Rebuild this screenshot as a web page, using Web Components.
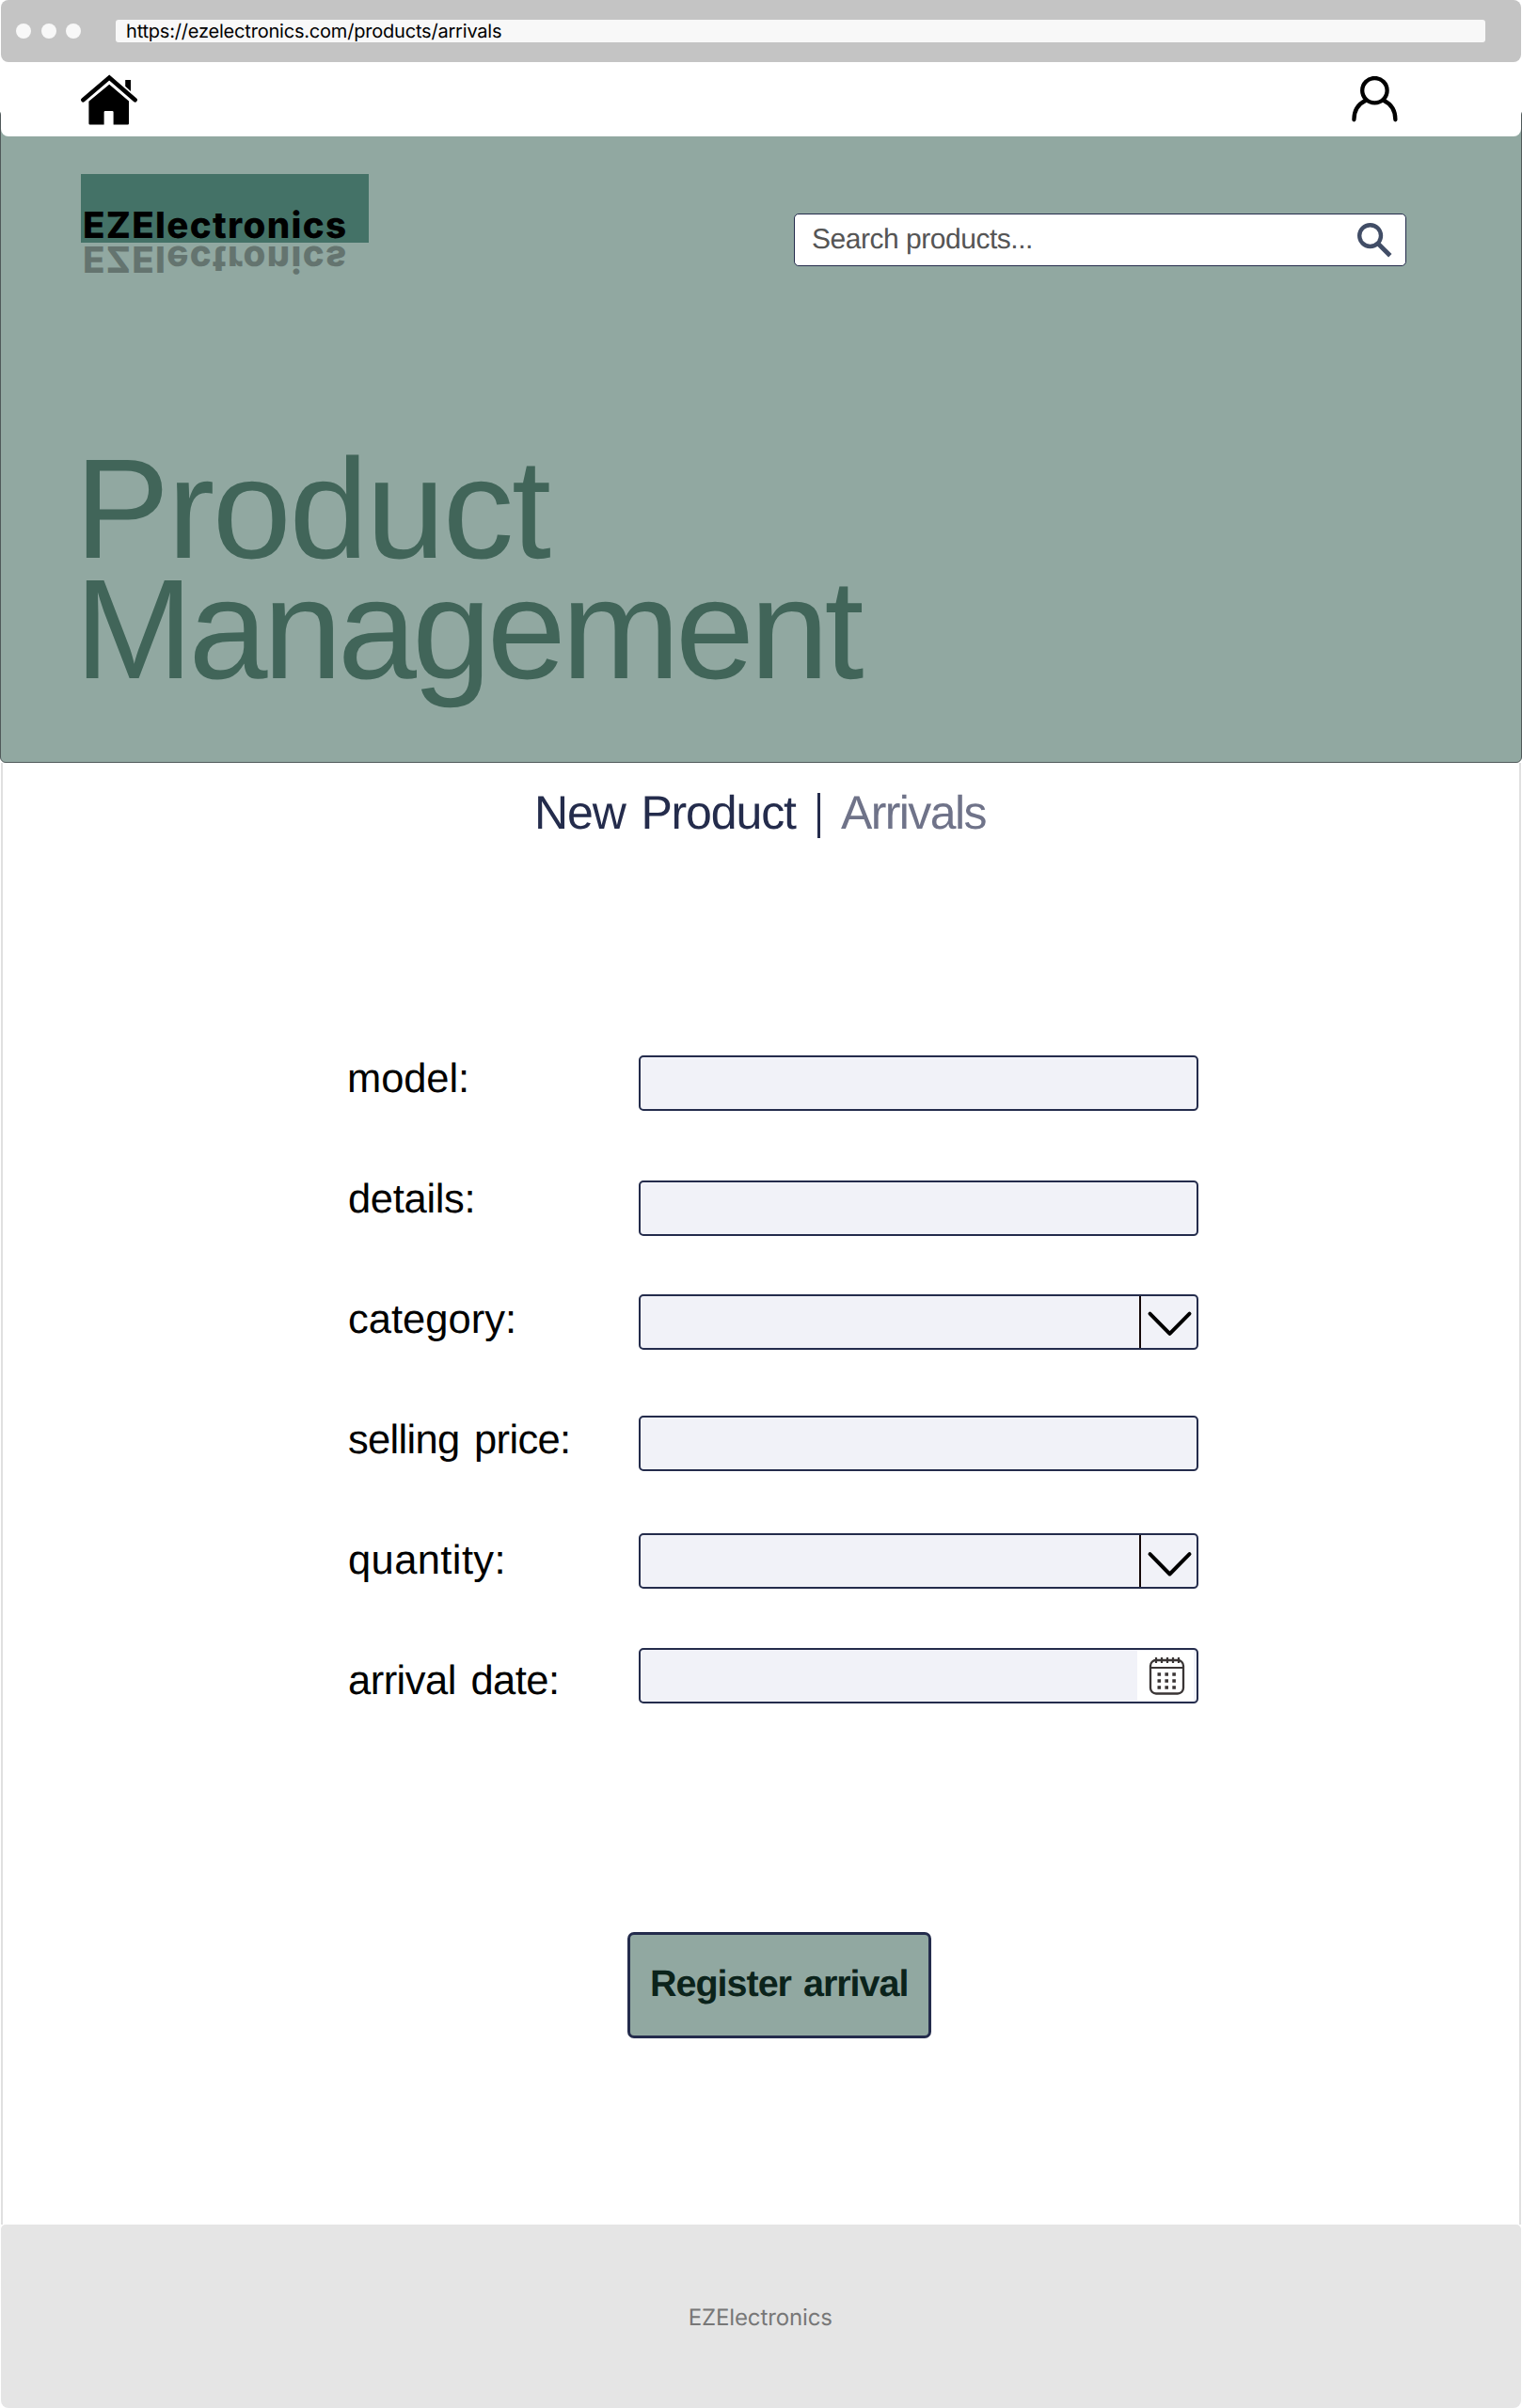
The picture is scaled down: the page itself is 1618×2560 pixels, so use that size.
<!DOCTYPE html>
<html lang="en">
<head>
<meta charset="utf-8">
<title>EZElectronics</title>
<style>
html,body{margin:0;background:#fff}
body{width:1618px;height:2560px;overflow:hidden}
</style>
</head>
<body>
<ez-page></ez-page>
<script>
const define = (name, html, after) => customElements.define(name, class extends HTMLElement {
  connectedCallback() {
    if (this.shadowRoot) return;
    this.attachShadow({mode: 'open'}).innerHTML = html;
    if (after) after.call(this, this.shadowRoot);
  }
});

/* Text whose drawn width is set by the "w" attribute through letter spacing;
   "gap" widens the spaces between words. */
const pen = document.createElement('canvas').getContext('2d');
define('ez-text', `<style>:host{display:block;white-space:nowrap;text-rendering:geometricPrecision}span{display:block}</style><span><slot></slot></span>`, function () {
  const cs = getComputedStyle(this), w = +this.getAttribute('w'), gap = +(this.getAttribute('gap') || 0), t = this.textContent;
  pen.font = `${cs.fontWeight} ${cs.fontSize} ${cs.fontFamily}`;
  const m = pen.measureText(t), ink = m.actualBoundingBoxLeft + m.actualBoundingBoxRight;
  this.style.width = w + 'px';
  const s = this.shadowRoot.querySelector('span');
  s.style.wordSpacing = gap + 'px';
  s.style.letterSpacing = (w - ink - gap * (t.split(' ').length - 1)) / (t.length - 1) + 'px';
  s.style.marginLeft = m.actualBoundingBoxLeft + 'px';
});

define('ez-chrome', `<style>
:host{display:flex;box-sizing:border-box;height:66px;margin:0 1px;padding:0 38px 0 16px;background:#c4c4c4;border-radius:8px;align-items:center;font-family:Inter,sans-serif}
.dots{display:flex;gap:10.5px;width:106px}
i{width:16px;height:16px;border-radius:50%;background:#f8f8f8}
.url{flex:1;height:24px;box-sizing:border-box;background:#f8f8f8;border-radius:3px;padding-left:12px}
ez-text{font-size:20px;line-height:24px;color:#000}
</style><div class="dots"><i></i><i></i><i></i></div><div class="url"><ez-text w="398">https://ezelectronics.com/products/arrivals</ez-text></div>`);

define('ez-topbar', `<style>
:host{display:flex;box-sizing:border-box;height:79px;margin:0 1px;padding:13px 131px 0 85px;background:#fff;border-radius:0 0 8px 8px;justify-content:space-between;position:relative;z-index:1}
svg{display:block}
.user{margin-top:2px}
</style>
<svg width="60" height="55" viewBox="0 0 60 55"><path d="M53 6V18L47.2 12.8V6Z"/><path d="M2.4 27.2 30.2 3.6 57.6 27.2" fill="none" stroke="#000" stroke-width="4.6" stroke-linecap="round"/><path d="M30.2 10.8 51 28.6V52.3Q51 53.6 49.8 53.6H34.6V40.3Q34.6 39 33.4 39H25.8Q24.6 39 24.6 40.3V53.6H9.6Q8.4 53.6 8.4 52.3V28.8Z"/></svg>
<svg class="user" width="49" height="49" viewBox="0 0 49 49" fill="none" stroke="#000" stroke-width="4.3" stroke-linecap="round"><circle cx="24.4" cy="15.2" r="13.2"/><path d="M2.4 46.3C2.4 37 7 29.5 15 25.8M46.4 46.3C46.4 37 41.8 29.5 33.8 25.8"/></svg>`);

define('ez-logo', `<style>
:host{display:block;width:306px;font:800 38.5px Inter,sans-serif;color:#000}
.box{height:73px;box-sizing:border-box;background:#447267;padding:36px 0 0 4px}
ez-text{line-height:38px}
.mirror{margin-top:-2px;padding-left:4px;transform:scaleY(-1);opacity:.3;height:38px}
</style><div class="box"><ez-text w="277">EZElectronics</ez-text></div><div class="mirror" aria-hidden="true"><ez-text w="277">EZElectronics</ez-text></div>`);

define('ez-search', `<style>
:host{display:flex;box-sizing:border-box;width:651px;height:56px;border:1.5px solid #242c4c;border-radius:5px;background:#fff;padding:0 14px 0 19px;justify-content:space-between;align-items:center;font:30px "Liberation Sans",sans-serif;color:#555}
ez-text{line-height:52px}
</style><ez-text w="232">Search products...</ez-text>
<svg width="37" height="37" viewBox="0 0 37 37" fill="none" stroke="#414d66"><circle cx="13.6" cy="13.6" r="11.4" stroke-width="4.4"/><path d="M22.5 22.5 34.8 34.8" stroke-width="4.8"/></svg>`);

define('ez-hero', `<style>
:host{display:block;box-sizing:border-box;height:695px;margin-top:-29px;padding:68px 122px 0 85px;background:#91a8a1;border:1.5px solid #50595a;border-radius:6px}
.row{display:flex;justify-content:space-between;height:292px}
ez-search{margin-top:42px}
h1{margin:0 0 0 5.5px;font:151px/128px "Liberation Sans",sans-serif;color:#416559}
</style><div class="row"><ez-logo></ez-logo><ez-search></ez-search></div>
<h1><ez-text w="493.5">Product</ez-text><ez-text w="826">Management</ez-text></h1>`);

define('ez-tabs', `<style>
:host{display:flex;padding:20px 0 0 572px;height:90px;box-sizing:border-box;font:50px/66px "Liberation Sans",sans-serif;color:#242c4c}
i{width:3.5px;height:48px;margin:12px 22px 0 21.5px;background:#242c4c}
.off{color:#6f7389}
</style><ez-text w="275" gap="4">New Product</ez-text><i></i><ez-text class="off" w="154.5">Arrivals</ez-text>`);

define('ez-field', `<style>
:host{display:flex;height:128px;width:903px;justify-content:space-between;align-items:flex-start;font:43.5px/128px "Liberation Sans",sans-serif;color:#000}
ez-text{margin-top:2.5px}
.in{display:flex;justify-content:flex-end;box-sizing:border-box;width:595px;height:59px;margin-top:var(--drop);border:2px solid #242c4c;border-radius:5px;background:#f1f2f8;overflow:hidden}
.sel{width:59px;border-left:2px solid #140808}
.cal{width:60px;height:53px;margin:1px 3px 0 0;background:#fff}
svg{display:block}
</style><ez-text></ez-text><div class="in"></div>`, function (r) {
  const t = r.querySelector('ez-text'), n = document.createElement('ez-text');
  n.setAttribute('w', this.getAttribute('w')); n.setAttribute('gap', 4); n.textContent = this.getAttribute('label'); t.replaceWith(n);
  const kind = this.getAttribute('kind');
  r.querySelector('.in').innerHTML = kind === 'select'
    ? `<div class="sel"><svg width="59" height="55" viewBox="0 0 59 55"><path d="M9.5 ${this.getAttribute('y')}l21 21.3 21-21.3" fill="none" stroke="#000" stroke-width="4" stroke-linecap="round" stroke-linejoin="round"/></svg></div>`
    : kind === 'date'
    ? `<div class="cal"><svg width="60" height="53" viewBox="0 0 60 53" fill="none" stroke="#3a3535"><rect x="14" y="10" width="35" height="35.5" rx="6" stroke-width="2.3"/><path d="M14 18H49" stroke-width="2.2"/><path d="M20 7v6m6-6v6m6-6v6m6-6v6m6-6v6" stroke-width="2.2"/><path d="M21.5 25h3.6m4.3 0h3.6m4.3 0h3.6M21.5 32h3.6m4.3 0h3.6m4.3 0h3.6M21.5 39h3.6m4.3 0h3.6m4.3 0h3.6" stroke-width="3.6"/></svg></div>` : '';
});

define('ez-form', `<style>
:host{display:block;padding:179px 0 0 371px;height:1153px;box-sizing:border-box}
</style>
<ez-field label="model:" w="125" style="--drop:42px"></ez-field>
<ez-field label="details:" w="131.5" style="--drop:47px"></ez-field>
<ez-field label="category:" w="175" kind="select" y="18.6" style="--drop:40px"></ez-field>
<ez-field label="selling price:" w="233" kind="text" style="--drop:41px"></ez-field>
<ez-field label="quantity:" w="163.5" kind="select" y="20.2" style="--drop:38px"></ez-field>
<ez-field label="arrival date:" w="221" kind="date" style="--drop:32px"></ez-field>`);

define('ez-button', `<style>
:host{display:flex;box-sizing:border-box;width:323px;height:113px;margin:0 0 198px 666px;border:3px solid #242c4c;border-radius:7px;background:#91a8a1;padding-left:23.5px;font:700 39.5px/105px "Liberation Sans",sans-serif;color:#0b231b}
</style><ez-text></ez-text>`, function (r) {
  const t = r.querySelector('ez-text'), n = document.createElement('ez-text');
  n.setAttribute('w', '271.5'); n.setAttribute('gap', 3); n.textContent = this.getAttribute('label'); t.replaceWith(n);
});

define('ez-footer', `<style>
:host{display:flex;justify-content:center;height:195px;box-sizing:border-box;margin:0 1px;background:#e5e5e5;border-radius:5px 5px 8px 8px;font:24px/198px Inter,sans-serif;color:#777}
</style><ez-text w="150.5">EZElectronics</ez-text>`);

define('ez-page', `<style>
:host{display:flex;flex-direction:column;width:1618px;height:2560px}
main{margin:0 1px;border:solid #e0e0e0;border-width:0 2px;height:1554px;box-sizing:border-box}
main>*{margin-left:-3px}
main>ez-button{margin-left:663.5px}
</style><ez-chrome></ez-chrome><ez-topbar></ez-topbar><ez-hero></ez-hero>
<main><ez-tabs></ez-tabs><ez-form></ez-form><ez-button label="Register arrival"></ez-button></main>
<ez-footer></ez-footer>`);
</script>
</body>
</html>
